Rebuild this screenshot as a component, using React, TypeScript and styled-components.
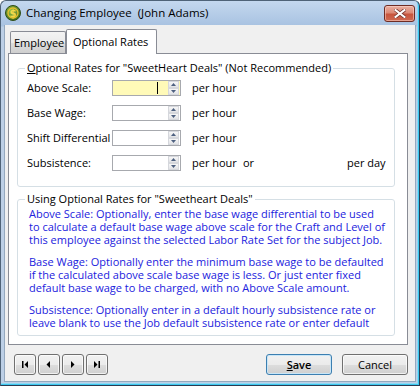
import React from 'react';
import styled, { createGlobalStyle } from 'styled-components';

const GlobalStyle = createGlobalStyle`
  html, body { margin: 0; padding: 0; background: #ffffff; }
  body {
    font-family: 'Open Sans', 'Noto Sans', sans-serif;
    font-size: 11px;
    color: #000000;
  }
  * { box-sizing: border-box; }
`;

const Window = styled.div`
  width: 420px;
  height: 386px;
  display: flex;
  flex-direction: column;
  background: linear-gradient(#c4d8ef, #a8c2e1 25px, #bccfe6 26px, #bccfe6);
  border: 1px solid #4f6378;
  border-right-color: #2b3c52;
  border-bottom-color: #2b3c52;
  border-radius: 6px 6px 0 0;
  box-shadow: inset -1px -1px 0 #3cc8f0, inset -2px -2px 0 #8fd8f2;
  overflow: hidden;
`;

const TitleBar = styled.div`
  height: 24px;
  display: flex;
  align-items: flex-start;
  padding: 4px 4px 0 4px;
`;

const TitleText = styled.span`
  margin-left: 5px;
  line-height: 16px;
  font-size: 11.5px;
  white-space: pre;
  color: #000000;
`;

const CloseButton = styled.div`
  margin-left: auto;
  width: 31px;
  height: 17px;
  border: 1px solid #6e2c24;
  border-radius: 3px;
  background: linear-gradient(#eab0a2 0%, #dc8a76 45%, #c7553d 55%, #cf6a52 100%);
  box-shadow: inset 0 0 0 1px rgba(255, 220, 210, 0.5);
  display: flex;
  align-items: center;
  justify-content: center;
`;

const Client = styled.div`
  flex: 1;
  margin: 0 3px 3px 3px;
  background: #f0f0f0;
  border: 1px solid #94a8be;
  border-top: none;
  display: flex;
  flex-direction: column;
  padding: 4px 7px 0 3px;
`;

const TabStrip = styled.div`
  height: 24px;
  display: flex;
  align-items: flex-end;
  padding-left: 2px;
  position: relative;
  z-index: 1;
`;

const Tab = styled.div<{ $active?: boolean }>`
  width: ${(p) => (p.$active ? 91 : 56)}px;
  height: ${(p) => (p.$active ? 25 : 22)}px;
  margin-bottom: ${(p) => (p.$active ? -1 : 0)}px;
  border: 1px solid #898c95;
  border-bottom: none;
  border-radius: 2px 2px 0 0;
  background: ${(p) =>
    p.$active ? '#ffffff' : 'linear-gradient(#f3f3f3 0%, #ebebeb 50%, #dddddd 51%, #cfcfcf 100%)'};
  padding-left: ${(p) => (p.$active ? 6 : 3)}px;
  line-height: ${(p) => (p.$active ? 23 : 22)}px;
  white-space: nowrap;
`;

const Panel = styled.div`
  height: 292px;
  background: #ffffff;
  border: 1px solid #898c95;
  padding: 6px 12px 8px 8px;
  display: flex;
  flex-direction: column;
`;

const Group = styled.fieldset<{ $grow?: boolean }>`
  margin: 0;
  padding: 0;
  min-width: 0;
  border: 1px solid #d5dfe5;
  border-radius: 3px;
  flex: ${(p) => (p.$grow ? '1' : 'none')};
  min-height: 0;
  & + & {
    margin-top: 4px;
  }
`;

const Legend = styled.legend`
  margin-left: 7px;
  padding: 0 2px;
  line-height: 16px;
  color: #000000;
  white-space: nowrap;
`;

const Accel = styled.span`
  text-decoration: underline;
`;

const RateGrid = styled.div`
  display: grid;
  grid-template-columns: 85px 69px auto;
  grid-auto-rows: 16px;
  row-gap: 9px;
  align-items: center;
  padding: 4px 0 15px 9px;
`;

const Label = styled.span`
  white-space: nowrap;
  line-height: 16px;
`;

const Unit = styled.div`
  display: flex;
  padding-left: 11px;
  white-space: nowrap;
  line-height: 16px;
`;

const UnitPart = styled.span<{ $w?: number }>`
  width: ${(p) => (p.$w ? `${p.$w}px` : 'auto')};
`;

const SpinBox = styled.div<{ $focused?: boolean }>`
  width: 69px;
  height: 16px;
  border: 1px solid #a7a9ae;
  background: ${(p) => (p.$focused ? '#fffab8' : '#ffffff')};
  display: flex;
  justify-content: flex-end;
  align-items: stretch;
  padding: 0 1px 0 0;
  position: relative;
`;

const Caret = styled.div`
  position: absolute;
  left: 44px;
  top: 1px;
  width: 1px;
  height: 12px;
  background: #000000;
`;

const SpinButtons = styled.div`
  width: 11px;
  display: flex;
  flex-direction: column;
`;

const SpinHalf = styled.div`
  flex: 1;
  border: 1px solid #d5d7dc;
  background: linear-gradient(#f7f7f7, #e2e3e6);
  display: flex;
  align-items: center;
  justify-content: center;
`;

const HelpText = styled.div`
  padding: 0 10px 0 11px;
  height: 123px;
  overflow: hidden;
  color: #2222dd;
  line-height: 13px;
  white-space: nowrap;
`;

const Para = styled.div`
  margin-bottom: 9px;
`;

const BottomBar = styled.div`
  margin-top: 9px;
  height: 21px;
  display: flex;
  align-items: stretch;
  padding-left: 6px;
`;

const NavButton = styled.div`
  width: 22px;
  margin-right: 2px;
  border: 1px solid #707070;
  border-radius: 3px;
  background: linear-gradient(#f2f2f2 0%, #ebebeb 50%, #dddddd 51%, #cfcfcf 100%);
  box-shadow: inset 0 0 0 1px rgba(255, 255, 255, 0.7);
  display: flex;
  align-items: center;
  justify-content: center;
`;

const DialogButton = styled.div<{ $default?: boolean }>`
  width: 66px;
  margin-left: ${(p) => (p.$default ? 'auto' : '10px')};
  border: 1px solid ${(p) => (p.$default ? '#3c7fb1' : '#707070')};
  border-radius: 3px;
  background: linear-gradient(#f2f2f2 0%, #ebebeb 50%, #dddddd 51%, #cfcfcf 100%);
  box-shadow: inset 0 0 0 1px ${(p) => (p.$default ? '#c9e6f7' : 'rgba(255, 255, 255, 0.7)')};
  display: flex;
  align-items: center;
  justify-content: center;
  font-weight: ${(p) => (p.$default ? 600 : 400)};
  line-height: 19px;
`;

function AppIcon() {
  return (
    <svg width="16" height="16" viewBox="0 0 16 16">
      <defs>
        <radialGradient id="g" cx="0.4" cy="0.35" r="0.7">
          <stop offset="0" stopColor="#9cc04a" />
          <stop offset="1" stopColor="#3d6a1c" />
        </radialGradient>
      </defs>
      <circle cx="8" cy="8" r="7.5" fill="url(#g)" stroke="#2f4d18" strokeWidth="1" />
      <circle cx="8" cy="8" r="5" fill="none" stroke="#e6c02a" strokeWidth="1.3" />
      <text x="8" y="11.5" textAnchor="middle" fontSize="10" fontWeight="bold" fill="#f2d84a" fontFamily="'DejaVu Sans', sans-serif">
        $
      </text>
    </svg>
  );
}

function CloseGlyph() {
  return (
    <svg width="12" height="9" viewBox="0 0 12 9">
      <path d="M1.5 1 L10.5 8 M10.5 1 L1.5 8" stroke="#7a3a32" strokeWidth="3.6" strokeLinecap="square" />
      <path d="M1.5 1 L10.5 8 M10.5 1 L1.5 8" stroke="#ffffff" strokeWidth="2" strokeLinecap="square" />
    </svg>
  );
}

function Arrow({ up }: { up?: boolean }) {
  return (
    <svg width="5" height="3" viewBox="0 0 5 3">
      <path d={up ? 'M0 3 L2.5 0 L5 3 Z' : 'M0 0 L5 0 L2.5 3 Z'} fill="#4d6080" />
    </svg>
  );
}

function Spin({ focused }: { focused?: boolean }) {
  return (
    <SpinBox $focused={focused}>
      {focused && <Caret />}
      <SpinButtons>
        <SpinHalf>
          <Arrow up />
        </SpinHalf>
        <SpinHalf>
          <Arrow />
        </SpinHalf>
      </SpinButtons>
    </SpinBox>
  );
}

function NavGlyph({ kind }: { kind: 'first' | 'prev' | 'next' | 'last' }) {
  const shapes = {
    first: 'M1 1 H2.5 V8 H1 Z M7 1 V8 L3.5 4.5 Z',
    prev: 'M5 1 V8 L1.5 4.5 Z',
    next: 'M2 1 V8 L5.5 4.5 Z',
    last: 'M1 1 V8 L4.5 4.5 Z M5.5 1 H7 V8 H5.5 Z',
  };
  return (
    <svg width="8" height="9" viewBox="0 0 8 9">
      <path d={shapes[kind]} fill="#000000" />
    </svg>
  );
}

const rows = ['Above Scale:', 'Base Wage:', 'Shift Differential', 'Subsistence:'];

export default function App() {
  return (
    <>
      <GlobalStyle />
      <Window>
        <TitleBar>
          <AppIcon />
          <TitleText>Changing Employee  (John Adams)</TitleText>
          <CloseButton>
            <CloseGlyph />
          </CloseButton>
        </TitleBar>
        <Client>
          <TabStrip>
            <Tab>Employee</Tab>
            <Tab $active>Optional Rates</Tab>
          </TabStrip>
          <Panel>
            <Group>
              <Legend>
                <Accel>O</Accel>ptional Rates for "SweetHeart Deals" (Not Recommended)
              </Legend>
              <RateGrid>
                {rows.map((label, i) => (
                  <React.Fragment key={label}>
                    <Label>{label}</Label>
                    <Spin focused={i === 0} />
                    {i < 3 ? (
                      <Unit>per hour</Unit>
                    ) : (
                      <Unit>
                        <UnitPart $w={51}>per hour</UnitPart>
                        <UnitPart $w={104}>or</UnitPart>
                        <UnitPart>per day</UnitPart>
                      </Unit>
                    )}
                  </React.Fragment>
                ))}
              </RateGrid>
            </Group>
            <Group $grow>
              <Legend>Using Optional Rates for "Sweetheart Deals"</Legend>
              <HelpText>
                <Para>
                  Above Scale: Optionally, enter the base wage differential to be used
                  <br />
                  to calculate a default base wage above scale for the Craft and Level of
                  <br />
                  this employee against the selected Labor Rate Set for the subject Job.
                </Para>
                <Para>
                  Base Wage: Optionally enter the minimum base wage to be defaulted
                  <br />
                  if the calculated above scale base wage is less. Or just enter fixed
                  <br />
                  default base wage to be charged, with no Above Scale amount.
                </Para>
                <Para>
                  Subsistence: Optionally enter in a default hourly subsistence rate or
                  <br />
                  leave blank to use the Job default subsistence rate or enter default
                </Para>
              </HelpText>
            </Group>
          </Panel>
          <BottomBar>
            <NavButton>
              <NavGlyph kind="first" />
            </NavButton>
            <NavButton>
              <NavGlyph kind="prev" />
            </NavButton>
            <NavButton>
              <NavGlyph kind="next" />
            </NavButton>
            <NavButton>
              <NavGlyph kind="last" />
            </NavButton>
            <DialogButton $default>
              <span>
                <Accel>S</Accel>ave
              </span>
            </DialogButton>
            <DialogButton>Cancel</DialogButton>
          </BottomBar>
        </Client>
      </Window>
    </>
  );
}
